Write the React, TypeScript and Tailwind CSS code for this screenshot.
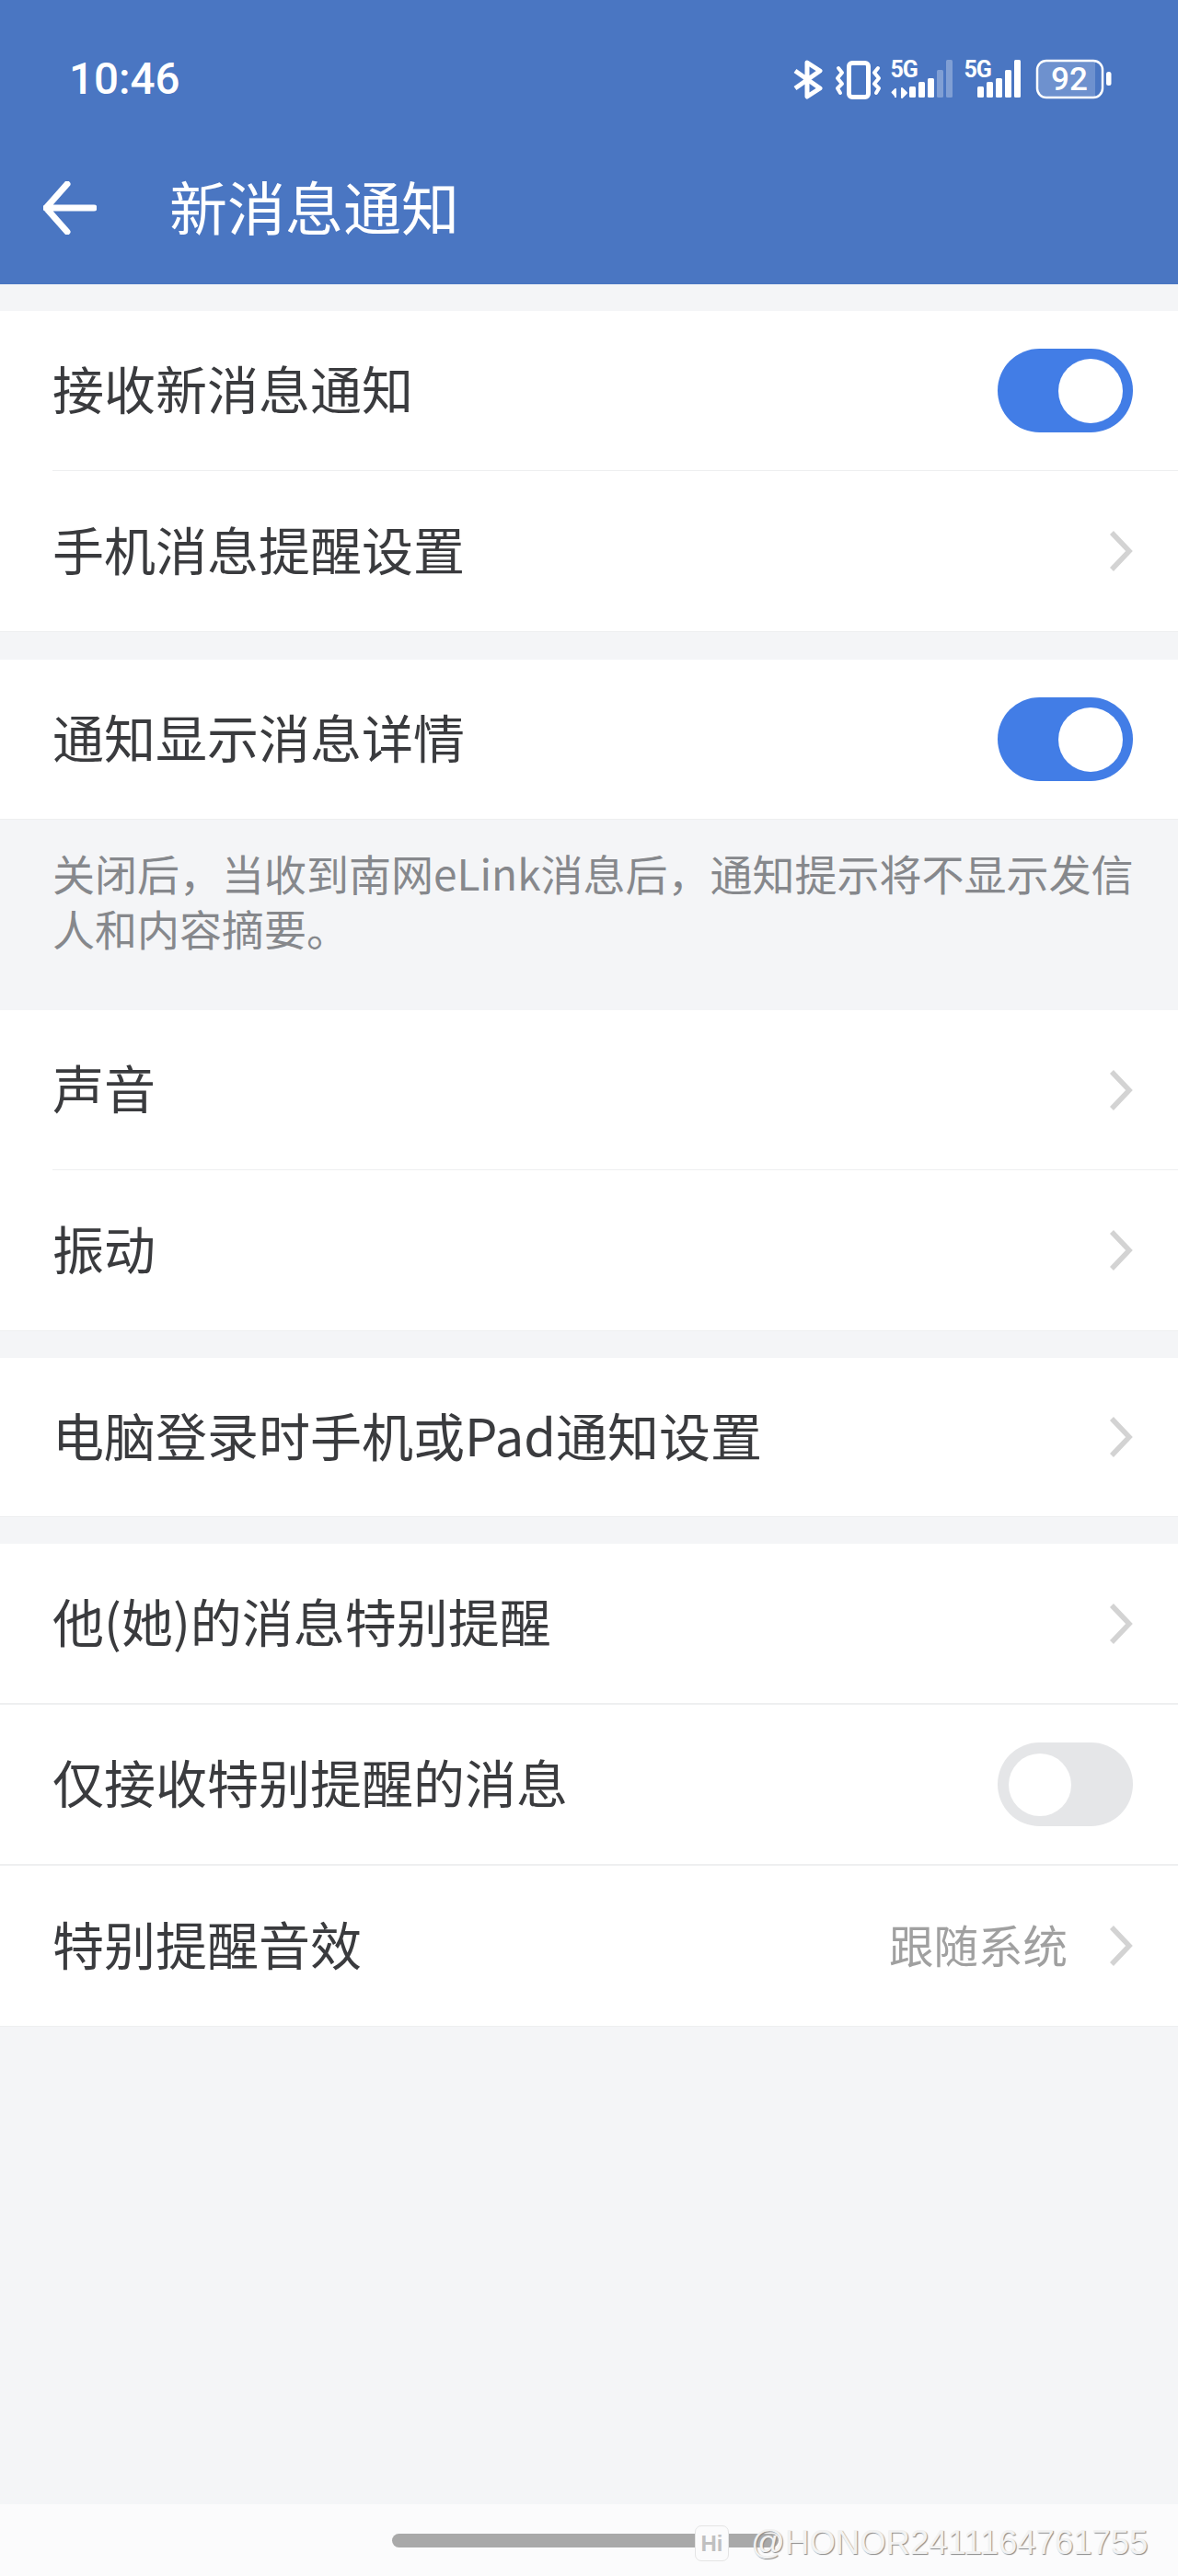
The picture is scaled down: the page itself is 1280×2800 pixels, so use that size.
import React from "react";

const cjk = "font-['Noto_Sans_CJK_SC','Noto_Sans',sans-serif]";

function Chevron() {
  return (
    <svg width="26" height="46" viewBox="0 0 26 46" className="shrink-0">
      <path d="M3 3 L22 23 L3 43" fill="none" stroke="#d3d3d3" strokeWidth="5.5" />
    </svg>
  );
}

function Toggle({ on }: { on: boolean }) {
  return on ? (
    <div className="flex h-[91px] w-[147px] shrink-0 items-center justify-end rounded-full bg-[#427de6] pr-[11px]">
      <div className="h-[70px] w-[70px] rounded-full bg-white" />
    </div>
  ) : (
    <div className="flex h-[91px] w-[147px] shrink-0 items-center justify-start rounded-full bg-[#e5e6e8] pl-[12px]">
      <div className="h-[68px] w-[68px] rounded-full bg-white" />
    </div>
  );
}

function Row({ label, right, h = "h-[173px]" }: { label: string; right: React.ReactNode; h?: string }) {
  return (
    <div className={`flex ${h} items-center justify-between pr-[49px]`}>
      <span className="mb-[7px] text-[56px] leading-none text-[#3a3b3e]">{label}</span>
      {right}
    </div>
  );
}

function Section({ children, className = "" }: { children: React.ReactNode; className?: string }) {
  return <div className={`border-b border-[#eeeff0] bg-white pl-[57px] ${className}`}>{children}</div>;
}

function StatusIcons() {
  const tops = [64, 59, 55, 46, 35];
  const bars = (xs: number[], faded: number) =>
    xs.map((x, i) => (
      <rect key={x} x={x} y={tops[i]} width="7" height={76 - tops[i]} rx="1.5" fill="#fff" fillOpacity={i >= faded ? 0.3 : 1} />
    ));
  return (
    <svg width="480" height="110" viewBox="0 0 480 110" className="shrink-0">
      <path d="M64 47 L91 66 L77 75 L77 38 L91 47 L64 66" fill="none" stroke="#fff" strokeWidth="5" strokeLinejoin="round" />
      <rect x="122.5" y="38.5" width="21" height="37" rx="3.5" fill="none" stroke="#fff" strokeWidth="5" />
      <g fill="none" stroke="#fff" strokeWidth="4" strokeLinecap="round" strokeLinejoin="round">
        <path d="M111 44 L115 49 L110 55 L115 61 L110 66 L113 71" />
        <path d="M154 44 L150 49 L155 55 L150 61 L155 66 L152 71" />
      </g>
      <text x="167.5" y="54" fontFamily="Roboto, sans-serif" fontWeight="700" fontSize="25" fill="#fff" letterSpacing="-1">5G</text>
      <text x="247.5" y="54" fontFamily="Roboto, sans-serif" fontWeight="700" fontSize="25" fill="#fff" letterSpacing="-1">5G</text>
      <path d="M169 71 L173 67 V76 M180 66 V76 L185 71 Z" fill="#fff" stroke="#fff" strokeWidth="2" strokeLinejoin="round" />
      {bars([188, 198, 208, 218, 228], 3)}
      {bars([262, 272, 282, 292, 302], 5)}
      <path d="M328 47 a10 10 0 0 1 10 -10 H390 V75 H338 a10 10 0 0 1 -10 -10 Z" fill="#fff" fillOpacity="0.2" />
      <rect x="327" y="36" width="71" height="40" rx="10" fill="none" stroke="#fff" strokeWidth="2.5" />
      <text x="362" y="68" textAnchor="middle" fontFamily="Roboto, sans-serif" fontWeight="500" fontSize="35" fill="#fff">92</text>
      <rect x="402" y="48" width="5.5" height="15" rx="2.5" fill="#fff" />
    </svg>
  );
}

export default function App() {
  return (
    <div className={`relative flex h-[2800px] w-[1280px] flex-col overflow-hidden bg-[#f4f5f7] ${cjk}`}>
      <header className="flex h-[309px] shrink-0 flex-col bg-[#4a76c2] text-white">
        <div className="flex h-[140px] items-start justify-between pt-[30px]">
          <span className="mt-[33px] pl-[75px] font-['Roboto',sans-serif] text-[47.5px] leading-none font-medium">10:46</span>
          <StatusIcons />
        </div>
        <div className="flex h-[170px] items-start pt-[57px]">
          <svg width="58" height="58" viewBox="0 0 58 58" className="ml-[47px] shrink-0">
            <path d="M26 3 L3 29 L26 55 M3 29 H55" fill="none" stroke="#fff" strokeWidth="7" strokeLinecap="round" strokeLinejoin="round" />
          </svg>
          <span className="ml-[79px] -mt-[3px] text-[63px] leading-[58px]">新消息通知</span>
        </div>
      </header>

      <Section className="mt-[29px]">
        <div className="border-b border-[#eeeff0]">
          <Row label="接收新消息通知" right={<Toggle on />} />
        </div>
        <Row label="手机消息提醒设置" right={<Chevron />} h="h-[174px]" />
      </Section>

      <Section className="mt-[30px]">
        <Row label="通知显示消息详情" right={<Toggle on />} />
      </Section>

      <p className="h-[207px] pt-[27px] pr-[40px] pl-[57px] text-[46px] leading-[60px] text-[#86888c]">
        关闭后，当收到南网eLink消息后，通知提示将不显示发信人和内容摘要。
      </p>

      <Section>
        <div className="border-b border-[#eeeff0]">
          <Row label="声音" right={<Chevron />} />
        </div>
        <Row label="振动" right={<Chevron />} h="h-[174px]" />
      </Section>

      <Section className="mt-[29px]">
        <Row label="电脑登录时手机或Pad通知设置" right={<Chevron />} h="h-[172px]" />
      </Section>

      <div className="mt-[29px] border-b border-[#eeeff0] bg-white">
        <div className="border-b-2 border-[#eeeff0] pl-[57px]">
          <Row label="他(她)的消息特别提醒" right={<Chevron />} />
        </div>
        <div className="border-b-2 border-[#eeeff0] pl-[57px]">
          <Row label="仅接收特别提醒的消息" right={<Toggle on={false} />} />
        </div>
        <div className="pl-[57px]">
          <Row
            label="特别提醒音效"
            h="h-[174px]"
            right={
              <div className="flex items-center gap-[45px]">
                <span className="mb-[4px] text-[48.5px] leading-none text-[#a0a0a0]">跟随系统</span>
                <Chevron />
              </div>
            }
          />
        </div>
      </div>

      <div className="flex-1" />

      <footer className="flex h-[78px] shrink-0 items-start bg-[#fbfbfc] pt-[32px] pl-[426px]">
        <div className="h-[15px] w-[420px] rounded-full bg-[#a9a9a9]" />
      </footer>

      <div className="absolute top-[2745px] left-[755px] flex h-[39px] w-[37px] items-center justify-center rounded-[7px] border border-[#e4e4e4] bg-[#fbfbfc] font-['Liberation_Sans',sans-serif] text-[24px] font-bold text-[#c0c0c0]">
        Hi
      </div>
      <span className="absolute top-[2744px] left-[816px] font-['Liberation_Sans',sans-serif] text-[36.5px] leading-[40px] text-[#f2f2f2] [text-shadow:1px_1px_1px_#8a8a8a]">
        @HONOR2411164761755
      </span>
    </div>
  );
}
